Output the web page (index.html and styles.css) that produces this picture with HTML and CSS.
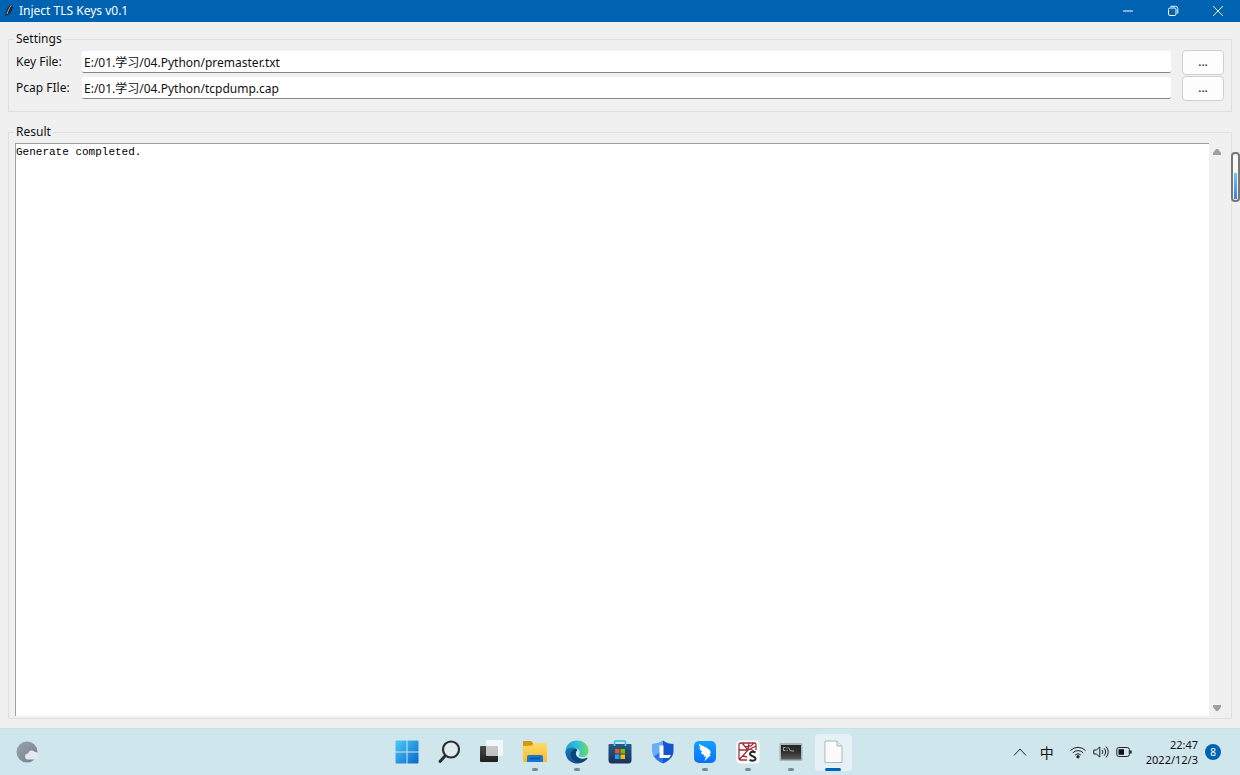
FILE: index.html
```html
<!DOCTYPE html>
<html lang="zh-CN">
<head>
<meta charset="utf-8">
<title>Inject TLS Keys v0.1</title>
<link rel="stylesheet" href="styles.css">
</head>
<body>
<header class="titlebar">
  <svg class="feather" width="10" height="16" viewBox="0 0 10 16"><path d="M1.500 14.500C1 9 3 3 7.500 1C9 1.500 9 4 8 7C7 10 5 12 3 12Z" fill="#1c2b3c"/><path d="M3 11C4 8 5 5 7.500 2" stroke="#8fb4d8" fill="none"/></svg>
  <h1 class="title">Inject TLS Keys v0.1</h1>
  <button class="winbtn" aria-label="Minimize"><svg width="12" height="12" viewBox="0 0 12 12"><path d="M1 6h10"/></svg></button>
  <button class="winbtn" aria-label="Restore"><svg width="12" height="12" viewBox="0 0 12 12"><rect x="1.500" y="3" width="7.500" height="7.500" rx="1.500"/><path d="M3.500 1.300h5a2.300 2.300 0 0 1 2.300 2.300v5"/></svg></button>
  <button class="winbtn" aria-label="Close"><svg width="12" height="12" viewBox="0 0 12 12"><path d="M1.200 1.200l9.600 9.600M10.800 1.200l-9.600 9.600"/></svg></button>
</header>
<main class="window">
  <section class="group" aria-labelledby="settings">
    <h2 class="caption" id="settings">Settings</h2>
    <div class="row">
      <label for="key">Key File:</label>
      <input class="path" id="key" type="text" value="E:/01.学习/04.Python/premaster.txt">
      <button class="browse" aria-label="Browse key file">...</button>
    </div>
    <div class="row">
      <label for="pcap">Pcap FIle:</label>
      <input class="path" id="pcap" type="text" value="E:/01.学习/04.Python/tcpdump.cap">
      <button class="browse" aria-label="Browse pcap file">...</button>
    </div>
  </section>
  <section class="group result">
    <h2 class="caption"><label for="log">Result</label></h2>
    <div class="output">
      <textarea class="log" id="log">Generate completed.</textarea>
      <div class="scroll">
        <svg width="10" height="8" viewBox="0 0 10 8"><path d="M4 1h2L9 5V7H1V5Z"/></svg>
        <svg width="10" height="8" viewBox="0 0 10 8"><path d="M1 1h8v2L6 7H4L1 3Z"/></svg>
      </div>
    </div>
  </section>
  <div class="gauge"><div class="level"></div></div>
</main>
<footer class="taskbar">
  <button class="weather" aria-label="Weather"><svg width="24" height="24" viewBox="0 0 24 24"><defs><linearGradient id="moon" x2="1" y2="1"><stop stop-color="#9aa5b0"/><stop offset="1" stop-color="#747e8a"/></linearGradient></defs><circle cx="11" cy="12" r="10.500" fill="url(#moon)"/><path d="M12 19.500a3 3 0 0 1 0-6 4 4 0 0 1 7-1.500 3.500 3.500 0 0 1 0 7.500Z" fill="#e5e9ed"/></svg></button>
  <nav class="apps">
    <button class="app" aria-label="Start"><svg width="24" height="24" viewBox="0 0 24 24"><defs><linearGradient id="win" x2="1" y2="1"><stop stop-color="#4ccbfb"/><stop offset="1" stop-color="#0867ca"/></linearGradient></defs><path d="M.5 1.500a1 1 0 0 1 1-1h10v11H.5ZM12.500.5h10a1 1 0 0 1 1 1v10h-11ZM.5 12.500h11v11h-10a1 1 0 0 1-1-1ZM12.500 12.500h11v10a1 1 0 0 1-1 1h-10Z" fill="url(#win)"/></svg></button>
    <button class="app" aria-label="Search"><svg width="24" height="24" viewBox="0 0 24 24" fill="none" stroke="#2d2d30"><circle cx="14" cy="9.500" r="8" stroke-width="2.200" fill="#ddecef"/><path d="M8 16L3 21.500" stroke-width="3" stroke-linecap="round"/></svg></button>
    <button class="app" aria-label="Task view"><svg width="24" height="24" viewBox="0 0 24 24"><defs><linearGradient id="tv" x2="0" y2="1"><stop stop-color="#4b4b4b"/><stop offset="1" stop-color="#1d1d1d"/></linearGradient></defs><rect x="0" y="6" width="18" height="16" rx="1" fill="url(#tv)"/><rect x="6" y="0" width="17" height="16" rx="1" fill="#fff" opacity=".7"/></svg></button>
    <button class="app running" aria-label="File Explorer"><svg width="24" height="24" viewBox="0 0 24 24"><defs><linearGradient id="fold" x2="0" y2="1"><stop stop-color="#ffdc67"/><stop offset="1" stop-color="#f9bb25"/></linearGradient></defs><path d="M0 2a1 1 0 0 1 1-1h7l2 2v4H0Z" fill="#d99410"/><path d="M0 6l9-.5L11 3h12a1 1 0 0 1 1 1v17a1 1 0 0 1-1 1H1a1 1 0 0 1-1-1Z" fill="url(#fold)"/><path d="M4 22v-5a2 2 0 0 1 2-2h12a2 2 0 0 1 2 2v5Z" fill="#1477d1"/><path d="M7 18.500h10" stroke="#075098" stroke-width="1.500"/></svg></button>
    <button class="app running" aria-label="Edge"><svg width="24" height="24" viewBox="0 0 24 24"><defs><linearGradient id="edge" x2="1"><stop stop-color="#229dd8"/><stop offset=".55" stop-color="#32c2d5"/><stop offset="1" stop-color="#70df52"/></linearGradient><linearGradient id="wave" x2="0" y2="1"><stop stop-color="#1678bd"/><stop offset="1" stop-color="#165392"/></linearGradient></defs><path d="M.5 12C.5 5 5.500.5 12 .5S23.500 5 23.500 11c0 4-3 6-6.500 6-2.500 0-4-1-3-2.500 2-3-.5-6-4-6C5 8.500.5 11 .5 15Z" fill="url(#edge)"/><path d="M.5 12C2 7.500 7 6.500 11 8.500c-4 1-5 4-4 7s4 5 8 5c3 0 5-1 7-2-2 3-6 5-10 5C5.500 23.500.5 18.500.5 12Z" fill="url(#wave)"/><path d="M11 8.500c-5 .5-7 6-4 10 2.500 3.500 7 5 11 3.300 2-.8 3.500-2 4.300-3.300.3-.6-.3-1-.8-.7-4.500 2-9.500.5-10.500-3.300-.5-2 .5-3.500 1.500-4.500Z" fill="#0c4677"/></svg></button>
    <button class="app" aria-label="Microsoft Store"><svg width="24" height="24" viewBox="0 0 24 24"><defs><linearGradient id="bag" x2="0" y2="1"><stop stop-color="#235c87"/><stop offset="1" stop-color="#1c315b"/></linearGradient></defs><path d="M6.500 6V2a1 1 0 0 1 1-1h9a1 1 0 0 1 1 1v4" fill="none" stroke="#35bfeb" stroke-width="1.600"/><path d="M.5 5a1 1 0 0 1 1-1h21a1 1 0 0 1 1 1v15a3.500 3.500 0 0 1-3.500 3.500H4A3.500 3.500 0 0 1 .5 20Z" fill="url(#bag)"/><path d="M7 9h4.500v4.500H7Z" fill="#ef5128"/><path d="M12.500 9H17v4.500h-4.500Z" fill="#7eb900"/><path d="M7 14.500h4.500V19H7Z" fill="#1ba4ed"/><path d="M12.500 14.500H17V19h-4.500Z" fill="#fdb900"/><path d="M6.500 4v2M17.500 4v2" stroke="#4bd1f3" stroke-width="1.600"/></svg></button>
    <button class="app" aria-label="Security"><svg width="24" height="24" viewBox="0 0 24 24"><path d="M12 .5C9 3 5 4 1.500 4v7c0 6 4.500 10 10.500 12.500Z" fill="#2c74ea"/><path d="M12 .5C9 3 5 4 1.500 4v7c0 2 .4 4 1.300 5.500L12 10Z" fill="#6aaef5"/><path d="M12 .5V23.500C18 21 22.500 17 22.500 11V4C19 4 15 3 12 .5Z" fill="#1455d1"/><path d="M8.500 5.500h4v9.500h7.500l-2 3H8.500Z" fill="#f7fbff"/></svg></button>
    <button class="app running" aria-label="Messenger"><svg width="24" height="24" viewBox="0 0 24 24"><defs><linearGradient id="msg" x2="0" y2="1"><stop stop-color="#14a0ff"/><stop offset="1" stop-color="#0870ff"/></linearGradient></defs><rect x="1" y="1" width="22" height="22" rx="5" fill="url(#msg)"/><path d="M6 3.500c2 2.500 10 4 11.500 8 .5 1.500-.5 2.500-1 3.500h1.500L11.500 21l1.500-4.500h-2.500l1-1.500C9 14.500 8 13 7.800 12l2 .3C7.500 10.500 6.500 9 6.400 7.500l1.500.6C6.500 6.500 6 5 6 3.500Z" fill="#fff"/></svg></button>
    <button class="app running" aria-label="Editor"><svg width="24" height="24" viewBox="0 0 24 24"><rect x=".5" y=".5" width="23" height="23" rx="4" fill="#fff"/><g fill="none" stroke="#a32b34" stroke-width="1.300"><path d="M11 20H4.500A1.500 1.500 0 0 1 3 18.500v-14A1.500 1.500 0 0 1 4.500 3h14A1.500 1.500 0 0 1 20 4.500V10M3 20L12 10 20 6M12 10L6 3M12 10l1-7M3 10l9 0M7 16l4 1M14 9l4 2M9 7l6-1 3-3"/></g><path d="M19.500 12.500c-2-1-5.500-1-5.500 1.500s5.500 2 5.500 4.500-3.500 2.500-6 1.500" fill="none" stroke="#282828" stroke-width="2"/></svg></button>
    <button class="app running" aria-label="Command Prompt"><svg width="24" height="24" viewBox="0 0 24 24"><defs><linearGradient id="cmd" x2="0" y2="1"><stop stop-color="#242424"/><stop offset=".5" stop-color="#303030"/><stop offset="1" stop-color="#5b5b5b"/></linearGradient></defs><rect x=".5" y="3" width="23" height="18" rx="1" fill="#aeb3b6"/><rect x="2" y="5" width="20" height="14.500" fill="url(#cmd)"/><path d="M6.500 7.500H4.500v3h2M8 7.500v1M8 10v1M9.500 7.500l2 3.500M12 11h3" fill="none" stroke="#c9c9c9" stroke-width=".8"/></svg></button>
    <button class="app running active" aria-label="Inject TLS Keys"><svg width="24" height="24" viewBox="0 0 24 24"><path d="M4 1h12l5 5v16.500H4Z" fill="#fbfbfb" stroke="#a2a6a8" stroke-width=".8"/><path d="M16 1v5h5" fill="#e8eaea" stroke="#a2a6a8" stroke-width=".8"/></svg></button>
  </nav>
  <div class="tray">
    <button class="icon" aria-label="Hidden icons"><svg width="16" height="16" viewBox="0 0 16 16"><path d="M2 11.500l6-6.500 6 6.500"/></svg></button>
    <button class="ime">中</button>
    <button class="status" aria-label="Network, volume and battery">
      <svg width="16" height="16" viewBox="0 0 16 16"><path d="M.5 6.500a10.500 10.500 0 0 1 15 0M2.800 8.800a7.300 7.300 0 0 1 10.400 0M5.200 11a4 4 0 0 1 5.600 0"/><circle cx="8" cy="12.800" r="1.200" fill="#222"/></svg>
      <svg width="16" height="16" viewBox="0 0 16 16"><path d="M.8 6h2.500l3.500-3v10L3.300 10H.8ZM9 6a3 3 0 0 1 0 4M11 4.200a5.300 5.300 0 0 1 0 7.600M13 2.500a8 8 0 0 1 0 11"/></svg>
      <svg width="16" height="16" viewBox="0 0 16 16"><rect x=".8" y="3.500" width="12.500" height="9" rx="2"/><rect x="2.500" y="5.200" width="5.500" height="5.600" fill="#111" stroke="none"/><path d="M14.800 6.500v3" stroke-width="1.800"/></svg>
    </button>
    <button class="clock"><time datetime="22:47">22:47</time><time datetime="2022-12-03">2022/12/3</time></button>
    <button class="badge" aria-label="8 notifications">8</button>
  </div>
</footer>
</body>
</html>
```
FILE: styles.css
```css
* { box-sizing: border-box; }

body {
  margin: 0;
  min-height: 100vh;
  display: flex;
  flex-direction: column;
  background: #f0f0f0;
  color: #111;
  font: 12px/16px "Noto Sans", "Noto Sans CJK SC", sans-serif;
}

button, input, textarea { font: inherit; color: inherit; }
button { padding: 0; border: 0; background: none; }
svg { display: block; }

.titlebar {
  display: flex;
  align-items: center;
  height: 22px;
  padding-left: 4px;
  background: #0063b1;
  color: #fff;
}
.title { flex: 1; margin: 0 0 0 5px; font-size: 12px; font-weight: 400; }
.winbtn { width: 45px; height: 22px; display: grid; place-items: center; }
.winbtn svg { fill: none; stroke: #fff; }

.window {
  position: relative;
  flex: 1;
  display: flex;
  flex-direction: column;
  gap: 20px;
  padding: 17px 8px 9px;
}
.group {
  display: flex;
  flex-direction: column;
  padding: 0 7px 10px;
  border: 1px solid #dfdfdf;
}
.caption {
  align-self: flex-start;
  margin: -9px 0 2px -2px;
  padding: 0 2px;
  background: #f0f0f0;
  font-size: 12px;
  font-weight: 400;
}
.row { display: flex; align-items: center; height: 26px; }
.row label { width: 66px; }
.path {
  flex: 1;
  min-width: 0;
  height: 22px;
  padding: 0 2px;
  border: 0;
  border-bottom: 1px solid #868686;
  border-radius: 2px;
  background: #fff;
}
.browse {
  width: 42px;
  height: 25px;
  margin-left: 11px;
  border: 1px solid #d0d0d0;
  border-radius: 4px;
  background: #fdfdfd;
}

.result { flex: 1; padding: 0 6px 2px; }
.result .caption { margin: -9px 0 3px -1px; }
.output { flex: 1; display: flex; }
.log {
  flex: 1;
  resize: none;
  padding: 1px 0;
  border: 0;
  border-top: 1px solid #a0a0a0;
  border-left: 1px solid #a0a0a0;
  outline: 0;
  background: #fff;
  color: #000;
  font: 11px/15px "Liberation Mono", monospace;
}
.scroll {
  width: 16px;
  display: flex;
  flex-direction: column;
  align-items: center;
  justify-content: space-between;
  padding: 5px 0 4px;
}
.scroll svg { fill: #a0a0a0; }

.gauge {
  position: absolute;
  top: 130px;
  right: 0;
  width: 9px;
  height: 50px;
  display: flex;
  align-items: flex-end;
  padding: 1px;
  border: 2px solid #777;
  border-radius: 4px;
  background: #f8f8f8;
}
.level { width: 100%; height: 60%; background: linear-gradient(#72c6ff, #347df6); }

.taskbar {
  display: grid;
  grid-template-columns: 1fr 469px 1fr;
  align-items: center;
  height: 47px;
  border-top: 1px solid #c8dfe5;
  background: #cfe6ed;
}
.weather { justify-self: start; margin-left: 16px; }
.apps { display: grid; grid-template-columns: repeat(11, 1fr); justify-items: center; }
.app { position: relative; width: 37px; height: 37px; display: grid; place-items: center; border-radius: 4px; }
.running::after {
  content: "";
  position: absolute;
  bottom: 0;
  left: 50%;
  width: 6px;
  height: 3px;
  margin-left: -3px;
  border-radius: 2px;
  background: #7d888c;
}
.active { background: #e6f1f6; }
.active::after { width: 16px; margin-left: -8px; background: #0063b1; }

.tray { display: flex; align-items: center; justify-content: flex-end; padding-right: 19px; }
.tray svg { fill: none; stroke: #222; stroke-width: 1; }
.ime { width: 16px; margin: 0 15px 0 11px; font: 14px/16px "Noto Sans CJK SC", sans-serif; }
.status { display: flex; gap: 7px; margin-right: 14px; }
.clock { display: flex; flex-direction: column; align-items: flex-end; font-size: 11px; line-height: 15px; }
.badge {
  width: 16px;
  height: 16px;
  margin-left: 7px;
  border-radius: 50%;
  background: #0063b1;
  color: #fff;
  font-size: 10px;
}
```
